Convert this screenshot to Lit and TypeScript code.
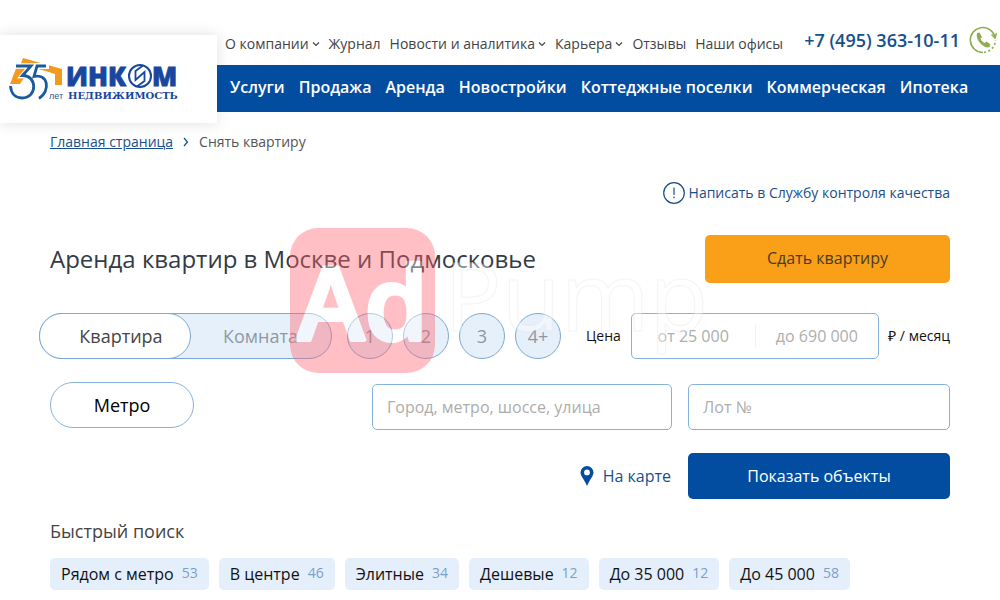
import { LitElement, html, css, svg, nothing } from "lit";
import { customElement, state } from "lit/decorators.js";

const chevron = svg`<path d="M1 1.5 L4 4.5 L7 1.5" fill="none" stroke="currentColor" stroke-width="1.2"/>`;

@customElement("site-header")
class SiteHeader extends LitElement {
  static styles = css`
    :host { display: block; font-family: "Open Sans", sans-serif; }
    .header { display: flex; align-items: flex-start; height: 112px; }
    .logo {
      flex: none; box-sizing: border-box; width: 217px; height: 88px; margin-top: 35px;
      padding: 20px 0 0 8px; background: #fff; box-shadow: 0 0 14px rgba(0, 0, 0, 0.13);
    }
    .logo svg { display: block; }
    .bars { flex: 1; min-width: 0; }
    .top {
      display: flex; align-items: center; justify-content: space-between;
      height: 65px; box-sizing: border-box; padding: 14px 3px 0 8px; white-space: nowrap;
    }
    .links { display: flex; gap: 9px; padding-top: 8px; }
    .link {
      display: flex; align-items: center; gap: 3px; font-size: 14px; line-height: 20px;
      color: #444; text-decoration: none;
    }
    .contact { display: flex; align-items: center; gap: 9px; }
    .phone { font-size: 18px; line-height: 24px; font-weight: 600; color: #174f8c; text-decoration: none; }
    .call { display: block; padding: 0; border: 0; background: none; cursor: pointer; }
    .call svg { display: block; }
    .menu {
      display: flex; align-items: center; gap: 14px; height: 47px; box-sizing: border-box;
      padding: 0 13px 4px; background: #034da1; white-space: nowrap;
    }
    .item { font-size: 16px; line-height: 24px; font-weight: 600; color: #fff; text-decoration: none; }
  `;

  private links: [string, boolean][] = [
    ["О компании", true], ["Журнал", false], ["Новости и аналитика", true],
    ["Карьера", true], ["Отзывы", false], ["Наши офисы", false],
  ];
  private menu = ["Услуги", "Продажа", "Аренда", "Новостройки", "Коттеджные поселки", "Коммерческая", "Ипотека"];

  render() {
    return html`
      <header class="header">
        <a class="logo" href="#" aria-label="Инком недвижимость">
          <svg width="174" height="48" viewBox="8 55 174 48">
            <path d="M23 58 L62 69 V85 H55 V74 L42 70 L31 67 L20 84 H10 L17 66 L20 66 Z" fill="#f39a1e"/>
            <path d="M16 66 H31 L23 75.500 C37 75 38 98 22 98 C15 98 11 93 10 86" fill="none" stroke="#fff" stroke-width="5.500"/>
            <path d="M49 66 H37 L34 76.500 C48 73 51 91 39 98.500" fill="none" stroke="#fff" stroke-width="6"/>
            <path d="M16 66 H31 L22.500 75.500 C37 75 38 98 22 98 C15 98 11 93 10.500 86" fill="none" stroke="#1c5a9c" stroke-width="2.800"/>
            <path d="M46 66 H37 L34 76.500 C48 73 51 91 39 98.500" fill="none" stroke="#1c5a9c" stroke-width="2.800"/>
            <text x="49" y="99" font-family="Liberation Sans Narrow, Liberation Sans" font-size="9" fill="#1c5a9c">лет</text>
            <g font-family="Open Sans" font-size="26" font-weight="800" fill="#17479e" stroke="#17479e" stroke-width=".8">
              <text x="66" y="86">ИНК</text>
              <text x="152" y="86">М</text>
            </g>
            <circle cx="140" cy="76" r="11" fill="#fff" stroke="#17479e" stroke-width="2"/>
            <path d="M143 65.500 L135.500 71 V80 L144.500 72 V81 L137 86.500" fill="none" stroke="#17479e" stroke-width="1.800"/>
            <text x="68" y="99" font-family="DejaVu Serif" font-size="10" font-weight="700" fill="#17479e">НЕДВИЖИМОСТЬ</text>
          </svg>
        </a>
        <div class="bars">
          <div class="top">
            <nav class="links">
              ${this.links.map(([text, sub]) => html`<a class="link" href="#">${text}${sub
                ? html`<svg width="8" height="6" viewBox="0 0 8 6">${chevron}</svg>` : nothing}</a>`)}
            </nav>
            <div class="contact">
              <a class="phone" href="tel:+74953631011">+7 (495) 363-10-11</a>
              <button class="call" aria-label="Обратный звонок">
                <svg width="28" height="28" viewBox="0 0 28 28" fill="none" stroke="#8fae4f">
                  <path d="M26 11 A12.500 12.500 0 1 0 14 26.500" stroke-width="1.600"/>
                  <path d="M15 26.400 A12.500 12.500 0 0 0 26.500 14" stroke-width="1.600" stroke-dasharray="2 2.500"/>
                  <path d="M22.500 8.500 L26 12 L27.500 7" stroke-width="1.500"/>
                  <path d="M8 7 L10.500 6.500 L13 11 L11.300 12.700 Q12.500 15.500 15.500 17 L17.500 15.500 L21.500 18.500 L20.500 21 Q17 22.500 12.500 18.500 Q6.500 13 8 7 Z" fill="#8fae4f" stroke="none"/>
                </svg>
              </button>
            </div>
          </div>
          <nav class="menu">${this.menu.map((m) => html`<a class="item" href="#">${m}</a>`)}</nav>
        </div>
      </header>`;
  }
}

@customElement("rent-search")
class RentSearch extends LitElement {
  static styles = css`
    :host { display: block; font-family: "Open Sans", sans-serif; }
    input, button { font-family: inherit; }
    .row { display: flex; align-items: center; }
    .main { margin-left: -11px; }
    .kinds { display: flex; width: 293px; height: 46px; box-sizing: border-box; border: 1px solid #7ba9d6; border-radius: 23px; background: #e6f0fb; }
    .option { display: flex; align-items: center; justify-content: center; cursor: pointer; box-sizing: border-box; font-size: 18px; color: #8e98a4; }
    .kind { flex: 1; height: 46px; margin: -1px; border: 1px solid transparent; border-radius: 23px; }
    .kind:has(:checked) { flex: none; width: 152px; padding-left: 12px; background: #fff; border-color: #7ba9d6; color: #444; }
    .hidden { appearance: none; width: 0; height: 0; margin: 0; }
    .rooms { display: flex; gap: 10px; margin-left: 15px; }
    .room { width: 46px; height: 46px; border: 1px solid #7ba9d6; border-radius: 50%; background: #e6f0fb; }
    .price { display: flex; flex: 1; align-items: center; margin-left: 25px; font-size: 14px; color: #111; white-space: nowrap; }
    .unit { padding-bottom: 2px; }
    .range { display: flex; flex: 1; height: 46px; box-sizing: border-box; margin: 0 9px 0 10px; border: 1px solid #86b3dc; border-radius: 5px; background: #fff; }
    .bound { flex: 1; min-width: 0; width: 0; padding: 0; border: 0; background: none; font-size: 16px; text-align: center; }
    .divider { width: 1px; margin: 11px 0; background: #f0f0f0; }
    ::placeholder { color: #adadad; opacity: 1; }
    .place { display: grid; grid-template-columns: 144px 1fr 300px 278px; align-items: start; margin-top: 23px; }
    .metro { height: 46px; border: 1px solid #86b3dc; border-radius: 23px; background: #fff; font-size: 18px; color: #000; cursor: pointer; }
    .field { grid-column: 3; height: 46px; box-sizing: border-box; margin-top: 2px; padding: 0 14px; border: 1px solid #86b3dc; border-radius: 5px; font-size: 16px; background: #fff; }
    .lot { grid-column: 4; margin-left: 16px; }
    .actions { justify-content: flex-end; gap: 17px; margin-top: 23px; }
    .map { display: flex; align-items: center; gap: 9px; color: #174f8c; text-decoration: none; font-size: 16px; }
    .submit { width: 262px; height: 46px; border: 0; border-radius: 5px; background: #034da1; color: #fff; font-size: 16px; cursor: pointer; }
  `;

  @state() private kind = "Квартира";

  render() {
    return html`
      <form @submit=${(e: Event) => e.preventDefault()}>
        <div class="row main">
          <div class="kinds" role="radiogroup" aria-label="Тип жилья">
            ${["Квартира", "Комната"].map((k) => html`
              <label class="option kind"><input class="hidden" type="radio" name="kind" .checked=${this.kind === k}
                @change=${() => (this.kind = k)}>${k}</label>`)}
          </div>
          <div class="rooms">
            ${["1", "2", "3", "4+"].map((n) => html`
              <label class="option room"><input class="hidden" type="checkbox" name="rooms">${n}</label>`)}
          </div>
          <div class="price">
            <label class="unit" for="from">Цена</label>
            <div class="range">
              <input class="bound" id="from" placeholder="от 25 000">
              <span class="divider"></span>
              <input class="bound" aria-label="Цена до" placeholder="до 690 000">
            </div>
            <span class="unit">₽ / месяц</span>
          </div>
        </div>
        <div class="place">
          <button class="metro" type="button">Метро</button>
          <input class="field" aria-label="Адрес" placeholder="Город, метро, шоссе, улица">
          <input class="field lot" aria-label="Лот №" placeholder="Лот №">
        </div>
        <div class="row actions">
          <a class="map" href="#">
            <svg width="14" height="20" viewBox="0 0 14 20"><path fill="#034da1" fill-rule="evenodd" d="M7 0 A6.500 6.500 0 0 0 .5 6.500 C.5 10 4 13 7 20 C10 13 13.500 10 13.500 6.500 A6.500 6.500 0 0 0 7 0 Z M7 3.500 A2.900 2.900 0 1 1 7 9.300 A2.900 2.900 0 1 1 7 3.500 Z"/></svg>
            На карте
          </a>
          <button class="submit">Показать объекты</button>
        </div>
      </form>`;
  }
}

@customElement("app-root")
class AppRoot extends LitElement {
  static styles = css`
    :host { display: block; position: relative; min-height: 100vh; overflow: hidden; background: #fff; font-family: "Open Sans", sans-serif; color: #444; }
    .page { padding: 20px 50px 0; }
    .crumbs { display: flex; align-items: center; gap: 10px; font-size: 14px; line-height: 20px; color: #555; }
    .home { color: #174f8c; }
    .quality { display: flex; justify-content: flex-end; margin-top: 29px; }
    .quality-link { display: flex; align-items: center; gap: 4px; font-size: 14px; line-height: 24px; color: #174f8c; text-decoration: none; }
    .heading { display: flex; align-items: center; justify-content: space-between; margin-top: 30px; }
    .title { margin: 0; font-size: 24px; line-height: 32px; font-weight: 400; color: #333b44; }
    .offer { width: 245px; height: 48px; padding: 0 0 2px; border: 0; border-radius: 5px; background: #f99f18; font: 16px "Open Sans", sans-serif; color: #4a3a28; cursor: pointer; }
    .search { margin-top: 30px; }
    .subtitle { margin: 20px 0 0; font-size: 18px; line-height: 24px; font-weight: 400; }
    .chips { display: flex; gap: 10px; margin-top: 15px; white-space: nowrap; }
    .chip { display: flex; gap: 8px; height: 32px; padding: 0 11px; border-radius: 5px; background: #e5effb; font-size: 16px; line-height: 32px; color: #111; text-decoration: none; }
    .count { font-size: 14px; line-height: 30px; color: #7a9fca; }
    .mark { position: absolute; left: 290px; top: 228px; opacity: 0.4; pointer-events: none; }
  `;

  private quick: [string, number][] = [
    ["Рядом с метро", 53], ["В центре", 46], ["Элитные", 34], ["Дешевые", 12], ["До 35 000", 12], ["До 45 000", 58],
  ];

  render() {
    return html`
      <site-header></site-header>
      <main class="page">
        <nav class="crumbs">
          <a class="home" href="#">Главная страница</a>
          <svg width="6" height="10" viewBox="0 0 6 10"><path d="M1 1 L4.500 5 L1 9" fill="none" stroke="#174f8c" stroke-width="1.200"/></svg>
          <span>Снять квартиру</span>
        </nav>
        <div class="quality">
          <a class="quality-link" href="#">
            <svg width="22" height="22" viewBox="0 0 22 22" fill="none" stroke="#174f8c" stroke-width="1.200">
              <circle cx="11" cy="11" r="10.300"/><path d="M11 5.500 V13 M11 14.500 V16.200"/>
            </svg>
            Написать в Службу контроля качества
          </a>
        </div>
        <div class="heading">
          <h1 class="title">Аренда квартир в Москве и Подмосковье</h1>
          <button class="offer">Сдать квартиру</button>
        </div>
        <rent-search class="search"></rent-search>
        <h2 class="subtitle">Быстрый поиск</h2>
        <div class="chips">
          ${this.quick.map(([t, n]) => html`<a class="chip" href="#">${t}<span class="count">${n}</span></a>`)}
        </div>
      </main>
      <svg class="mark" width="420" height="146" viewBox="0 0 420 146" aria-hidden="true">
        <rect width="145" height="145" rx="28" fill="#ff626e"/>
        <text x="7" y="112" font-family="Open Sans" font-size="102" font-weight="600" fill="#fff" stroke="#fff" stroke-width="4" stroke-linejoin="round">Ad</text>
        <text x="154" y="103" font-family="Open Sans" font-size="96" font-weight="400" fill="#fff" stroke="#e6e6e6" stroke-width="1">Pump</text>
      </svg>`;
  }
}
